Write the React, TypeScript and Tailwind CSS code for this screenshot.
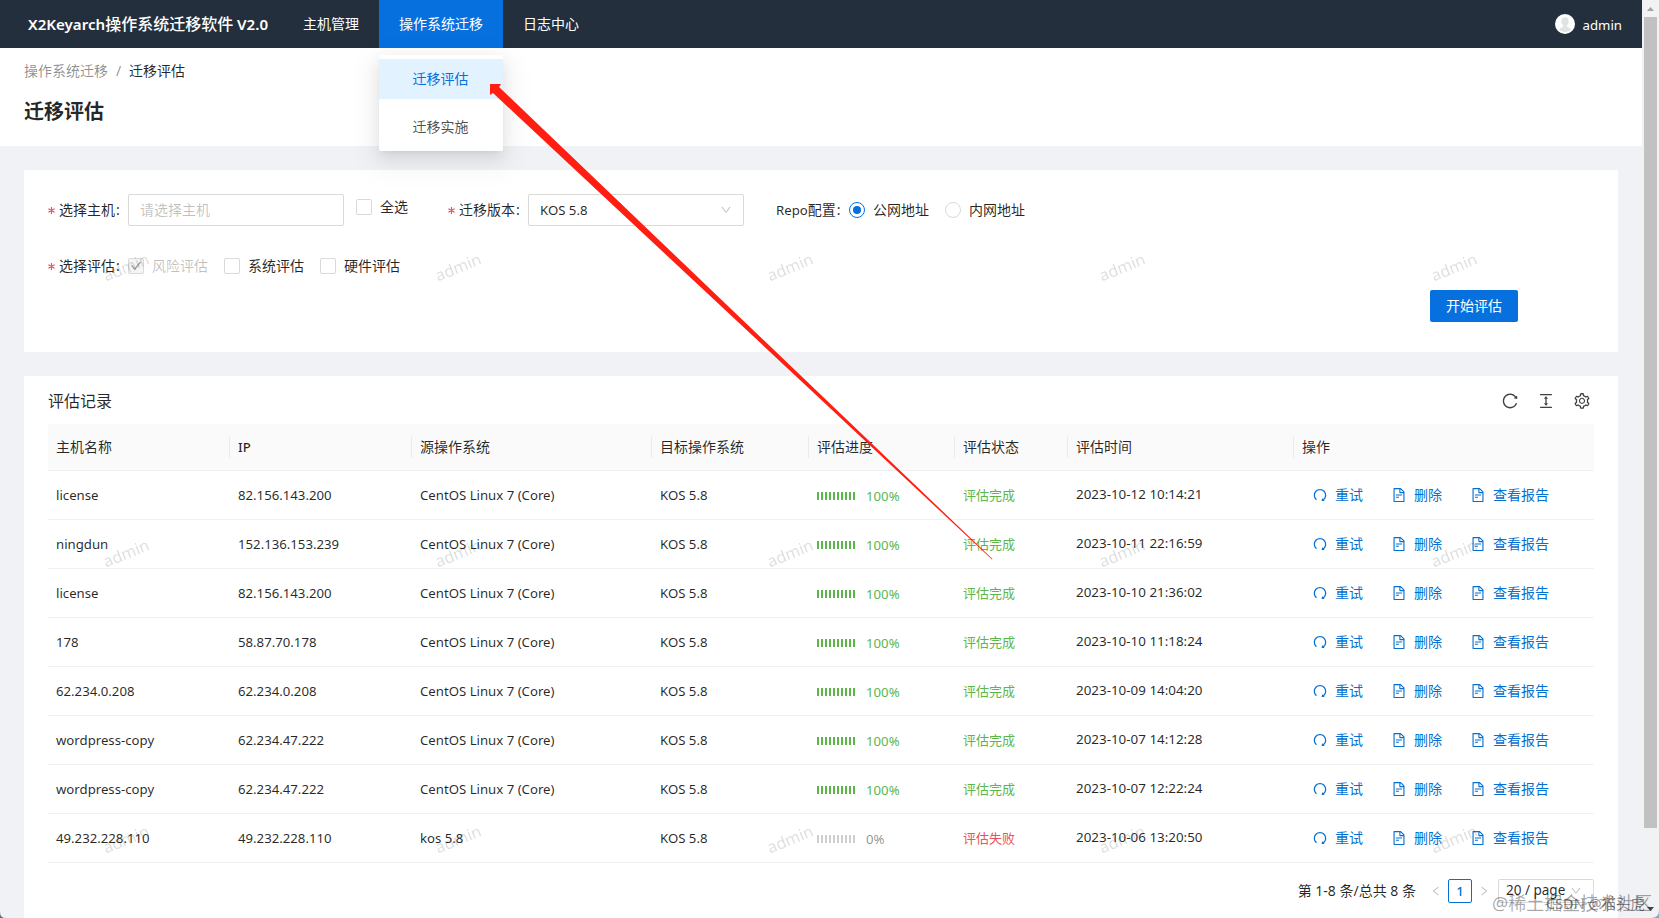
import type { ReactNode } from "react";
import {
  AiOutlineCheck,
  AiOutlineColumnHeight,
  AiOutlineDown,
  AiOutlineFileText,
  AiOutlineLeft,
  AiOutlineRedo,
  AiOutlineReload,
  AiOutlineRight,
  AiOutlineSetting,
} from "react-icons/ai";
import clsx from "clsx";

interface AssessRecord {
  host: string;
  ip: string;
  source: string;
  target: string;
  percent: number;
  time: string;
}

const CENTOS = "CentOS Linux 7 (Core)";

const records: AssessRecord[] = [
  { host: "license", ip: "82.156.143.200", source: CENTOS, target: "KOS 5.8", percent: 100, time: "2023-10-12 10:14:21" },
  { host: "ningdun", ip: "152.136.153.239", source: CENTOS, target: "KOS 5.8", percent: 100, time: "2023-10-11 22:16:59" },
  { host: "license", ip: "82.156.143.200", source: CENTOS, target: "KOS 5.8", percent: 100, time: "2023-10-10 21:36:02" },
  { host: "178", ip: "58.87.70.178", source: CENTOS, target: "KOS 5.8", percent: 100, time: "2023-10-10 11:18:24" },
  { host: "62.234.0.208", ip: "62.234.0.208", source: CENTOS, target: "KOS 5.8", percent: 100, time: "2023-10-09 14:04:20" },
  { host: "wordpress-copy", ip: "62.234.47.222", source: CENTOS, target: "KOS 5.8", percent: 100, time: "2023-10-07 14:12:28" },
  { host: "wordpress-copy", ip: "62.234.47.222", source: CENTOS, target: "KOS 5.8", percent: 100, time: "2023-10-07 12:22:24" },
  { host: "49.232.228.110", ip: "49.232.228.110", source: "kos 5.8", target: "KOS 5.8", percent: 0, time: "2023-10-06 13:20:50" },
];

const columns = [
  { title: "主机名称", width: "w-[182px]" },
  { title: "IP", width: "w-[182px]" },
  { title: "源操作系统", width: "w-[240px]" },
  { title: "目标操作系统", width: "w-[157px]" },
  { title: "评估进度", width: "w-[146px]" },
  { title: "评估状态", width: "w-[113px]" },
  { title: "评估时间", width: "w-[226px]" },
  { title: "操作", width: "w-[300px]" },
];

const markRows = [267, 553, 839];
const markCols = [126, 458, 790, 1122, 1454];

export default function App() {
  return (
    <div className="relative flex h-[918px] w-[1659px] overflow-hidden bg-[#f0f2f5] font-['Noto_Sans','Noto_Sans_CJK_SC',sans-serif] text-sm text-black/85">
      <div className="flex w-[1642px] flex-col">
        <TopBar />
        <PageHeader />
        <main className="flex flex-col gap-6 p-6">
          <AssessForm />
          <RecordTable />
        </main>
      </div>
      <ScrollBar />
      <Watermarks />
      <Pointer />
      <Credits />
      <svg className="absolute bottom-0 left-0 h-1.5 w-1.5" viewBox="0 0 6 6">
        <path d="M0 0 Q0 6 6 6 H0Z" fill="#5d7272" />
      </svg>
      <svg className="absolute right-0 bottom-0 h-2 w-2" viewBox="0 0 8 8">
        <path d="M8 0 Q8 8 0 8 H8Z" fill="#8fa5bd" />
      </svg>
    </div>
  );
}

function TopBar() {
  return (
    <header className="flex h-12 shrink-0 items-center bg-[#242f3e] text-white">
      <h1 className="w-[284px] pl-7 text-base font-semibold whitespace-nowrap">
        <span className="text-[15.1px]">X2Keyarch</span>
        <span className="font-medium">操作系统迁移软件</span>
        <span className="text-[15.1px]"> V2.0</span>
      </h1>
      <nav className="flex h-full">
        <a className="flex w-[95px] items-center justify-center pr-px">主机管理</a>
        <div className="relative">
          <a className="flex h-full w-[124px] items-center justify-center bg-[#0670df]">操作系统迁移</a>
          <ul className="absolute top-[55px] left-0 z-20 flex h-24 w-[124px] flex-col gap-2 rounded-xs bg-white py-1 text-center leading-10 shadow-[0_3px_6px_-4px_rgba(0,0,0,.12),0_6px_16px_0_rgba(0,0,0,.08),0_9px_28px_8px_rgba(0,0,0,.05)]">
            <li className="h-10 bg-[#e3f2ff] pr-px text-[#0670df]">迁移评估</li>
            <li className="h-10 pr-px text-black/70">迁移实施</li>
          </ul>
        </div>
        <a className="flex w-24 items-center justify-center">日志中心</a>
      </nav>
      <div className="ml-auto flex items-center gap-2 pr-5">
        <svg className="h-5 w-5" viewBox="0 0 20 20">
          <circle cx="10" cy="10" r="10" fill="#fff" />
          <path
            d="M10 3.2c2.400 0 3.700 1.700 3.700 4 0 1.800-.8 3.300-1.800 4.100v1.200c0 .8 3.600 1.200 3.800 3.300-3 2.800-8.400 2.800-11.400 0 .2-2.100 3.800-2.500 3.800-3.300v-1.200c-1-.8-1.800-2.300-1.800-4.100 0-2.300 1.300-4 3.700-4z"
            fill="#dfe3e3"
          />
        </svg>
        <span className="pt-0.5 text-[13.2px]">admin</span>
      </div>
    </header>
  );
}

function PageHeader() {
  return (
    <section className="h-[98px] shrink-0 bg-white px-6 pt-3">
      <div className="flex leading-[22px]">
        <span className="text-black/45">操作系统迁移</span>
        <span className="w-[21px] text-center text-black/45">/</span>
        <span>迁移评估</span>
      </div>
      <h2 className="mt-3.5 text-xl leading-8 font-bold">迁移评估</h2>
    </section>
  );
}

function AssessForm() {
  return (
    <section className="flex h-[182px] flex-col bg-white px-6 pt-6">
      <div className="flex h-8 items-center">
        <FieldLabel required>选择主机</FieldLabel>
        <div className="flex h-8 w-[216px] items-center rounded-xs border border-[#d9d9d9] px-[11px] text-black/25">
          请选择主机
        </div>
        <div className="-mt-1.5 ml-3">
          <Checkbox>全选</Checkbox>
        </div>
        <div className="ml-10 flex items-center">
          <FieldLabel required>迁移版本</FieldLabel>
          <div className="flex h-8 w-[216px] items-center justify-between rounded-xs border border-[#d9d9d9] px-[11px]">
            <span className="text-[13.2px]">KOS 5.8</span>
            <AiOutlineDown className="h-3 w-3 text-black/25" />
          </div>
        </div>
        <div className="ml-8 flex items-center">
          <div className="w-[73px] whitespace-nowrap">
            <span className="text-[13.2px]">Repo</span>配置
            <span className="ml-px">:</span>
          </div>
          <Radio checked>公网地址</Radio>
          <div className="ml-4">
            <Radio>内网地址</Radio>
          </div>
        </div>
      </div>

      <div className="mt-6 flex h-8 items-center gap-4">
        <div className="flex items-center">
          <FieldLabel required>选择评估</FieldLabel>
          <Checkbox disabled>风险评估</Checkbox>
        </div>
        <Checkbox>系统评估</Checkbox>
        <Checkbox>硬件评估</Checkbox>
      </div>

      <button className="mt-2 mr-[76px] h-8 w-[88px] self-end rounded-xs bg-[#0670df] text-sm text-white">
        开始评估
      </button>
    </section>
  );
}

function FieldLabel({ required, children }: { required?: boolean; children: ReactNode }) {
  return (
    <div className="flex w-20 items-center whitespace-nowrap">
      {required && (
        <svg className="mr-1 h-[7px] w-[7px]" viewBox="0 0 7 7" stroke="#e0566c" strokeWidth="1.200">
          <path d="M3.500 0v7M.4 1.700l6.200 3.600M6.600 1.700L.4 5.300" />
        </svg>
      )}
      {children}
      <span className="ml-px">:</span>
    </div>
  );
}

function Checkbox({ disabled, children }: { disabled?: boolean; children: ReactNode }) {
  return (
    <label className={clsx("flex items-center gap-2", disabled && "text-black/25")}>
      <span
        className={clsx(
          "flex h-4 w-4 items-center justify-center rounded-xs border border-[#d9d9d9]",
          disabled && "bg-[#f5f5f5]",
        )}
      >
        {disabled && <AiOutlineCheck className="h-3 w-3 stroke-[60] text-black/25" />}
      </span>
      {children}
    </label>
  );
}

function Radio({ checked, children }: { checked?: boolean; children: ReactNode }) {
  return (
    <label className="flex items-center gap-2">
      <span
        className={clsx(
          "flex h-4 w-4 items-center justify-center rounded-full border",
          checked ? "border-[#0670df]" : "border-[#d9d9d9]",
        )}
      >
        {checked && <span className="h-2 w-2 rounded-full bg-[#0670df]" />}
      </span>
      {children}
    </label>
  );
}

function RecordTable() {
  return (
    <section className="flex h-[566px] flex-col bg-white px-6">
      <div className="flex h-12 shrink-0 items-center justify-between pt-px pr-[3px]">
        <h3 className="text-base">评估记录</h3>
        <div className="flex gap-[18px] text-lg text-black/75">
          <AiOutlineReload />
          <AiOutlineColumnHeight />
          <AiOutlineSetting />
        </div>
      </div>

      <table className="w-[1546px] table-fixed border-separate border-spacing-0">
        <thead>
          <tr className="h-[47px]">
            {columns.map((col, i) => (
              <th
                key={col.title}
                className={clsx("border-b border-[#f0f0f0] bg-[#fafafa] p-0 text-left font-normal", col.width)}
              >
                <div
                  className={clsx(
                    "flex h-[22px] items-center pl-2",
                    i < columns.length - 1 && "border-r border-black/6",
                    col.title === "IP" && "text-[13.2px] font-medium",
                  )}
                >
                  {col.title}
                </div>
              </th>
            ))}
          </tr>
        </thead>
        <tbody className="text-[13.2px]">
          {records.map((record) => (
            <tr key={record.time} className="h-[49px]">
              <Cell>{record.host}</Cell>
              <Cell>{record.ip}</Cell>
              <Cell>{record.source}</Cell>
              <Cell>{record.target}</Cell>
              <Cell>
                <Progress percent={record.percent} />
              </Cell>
              <Cell>
                <span className={clsx("text-[13px]", record.percent === 100 ? "text-[#5cb74a]" : "text-[#e8545a]")}>
                  {record.percent === 100 ? "评估完成" : "评估失败"}
                </span>
              </Cell>
              <Cell>
                <span className="text-[13.4px]">{record.time}</span>
              </Cell>
              <Cell>
                <div className="flex gap-[28px] pl-[10px] text-sm text-[#0670d0]">
                  <Action icon={<AiOutlineRedo className="h-4 w-4" />}>重试</Action>
                  <Action icon={<AiOutlineFileText className="h-4 w-4" />}>删除</Action>
                  <Action icon={<AiOutlineFileText className="h-4 w-4" />}>查看报告</Action>
                </div>
              </Cell>
            </tr>
          ))}
        </tbody>
      </table>

      <div className="mt-4 flex h-6 shrink-0 items-center justify-end">
        <span className="mr-[14px] whitespace-nowrap">第 1-8 条/总共 8 条</span>
        <AiOutlineLeft className="h-3 w-3 text-black/25" />
        <span className="mx-1.5 flex h-6 w-6 items-center justify-center rounded-xs border border-[#0670d0] text-[13.2px] font-medium text-[#0670d0]">
          1
        </span>
        <AiOutlineRight className="h-3 w-3 text-black/25" />
        <div className="ml-2 flex h-6 w-24 items-center justify-between rounded-xs border border-[#d9d9d9] pr-[11px] pl-[7px]">
          <span className="text-[13.5px]">20 / page</span>
          <AiOutlineDown className="h-3 w-3 text-black/25" />
        </div>
      </div>
    </section>
  );
}

function Cell({ children }: { children: ReactNode }) {
  return <td className="border-b border-[#f0f0f0] p-0 pl-2 whitespace-nowrap">{children}</td>;
}

function Action({ icon, children }: { icon: ReactNode; children: ReactNode }) {
  return (
    <a className="flex items-center gap-[7px]">
      {icon}
      {children}
    </a>
  );
}

function Progress({ percent }: { percent: number }) {
  const done = percent === 100;
  return (
    <div className="flex items-center pt-0.5">
      <div className="flex gap-0.5">
        {Array.from({ length: 10 }, (_, i) => (
          <span key={i} className={clsx("h-2 w-0.5", done ? "bg-[#5cb74a]" : "bg-[#cfcfcf]")} />
        ))}
      </div>
      <span className={clsx("ml-[11px]", done ? "text-[#5cb74a]" : "text-black/45")}>{percent}%</span>
    </div>
  );
}

function ScrollBar() {
  return (
    <div className="flex w-[17px] flex-col items-center bg-[#f1f2f4]">
      <svg className="h-[17px] w-[17px]" viewBox="0 0 17 17">
        <path d="M5 11h7L8.500 7z" fill="#a3a3a3" />
      </svg>
      <div className="h-[811px] w-[13px] bg-[#c1c1c1]" />
      <svg className="mt-auto h-[17px] w-[17px]" viewBox="0 0 17 17">
        <path d="M5 6h7L8.500 10z" fill="#404040" />
      </svg>
    </div>
  );
}

function Watermarks() {
  return (
    <div className="pointer-events-none absolute inset-0 z-10">
      {markRows.map((top) =>
        markCols.map((left) => (
          <span
            key={`${left}-${top}`}
            className="absolute -translate-x-1/2 -translate-y-1/2 -rotate-[22deg] text-base text-black/15"
            style={{ left, top }}
          >
            admin
          </span>
        )),
      )}
    </div>
  );
}

function Pointer() {
  return (
    <svg className="pointer-events-none absolute inset-0 z-30 h-full w-full" viewBox="0 0 1659 918">
      <polygon points="490,84 501,84 499,87 992.500,559 992,559.500 493,93 490,95" fill="#ff1f12" />
    </svg>
  );
}

function Credits() {
  return (
    <div className="pointer-events-none absolute right-0 bottom-0 z-30 h-8 w-[167px] leading-8 whitespace-nowrap">
      <span className="absolute top-px left-0 text-[18px] text-black/35">@稀土掘金技术社区</span>
      <span className="absolute top-px left-[54px] text-[14.5px] text-black/45">CSDN @猫头虎</span>
    </div>
  );
}
